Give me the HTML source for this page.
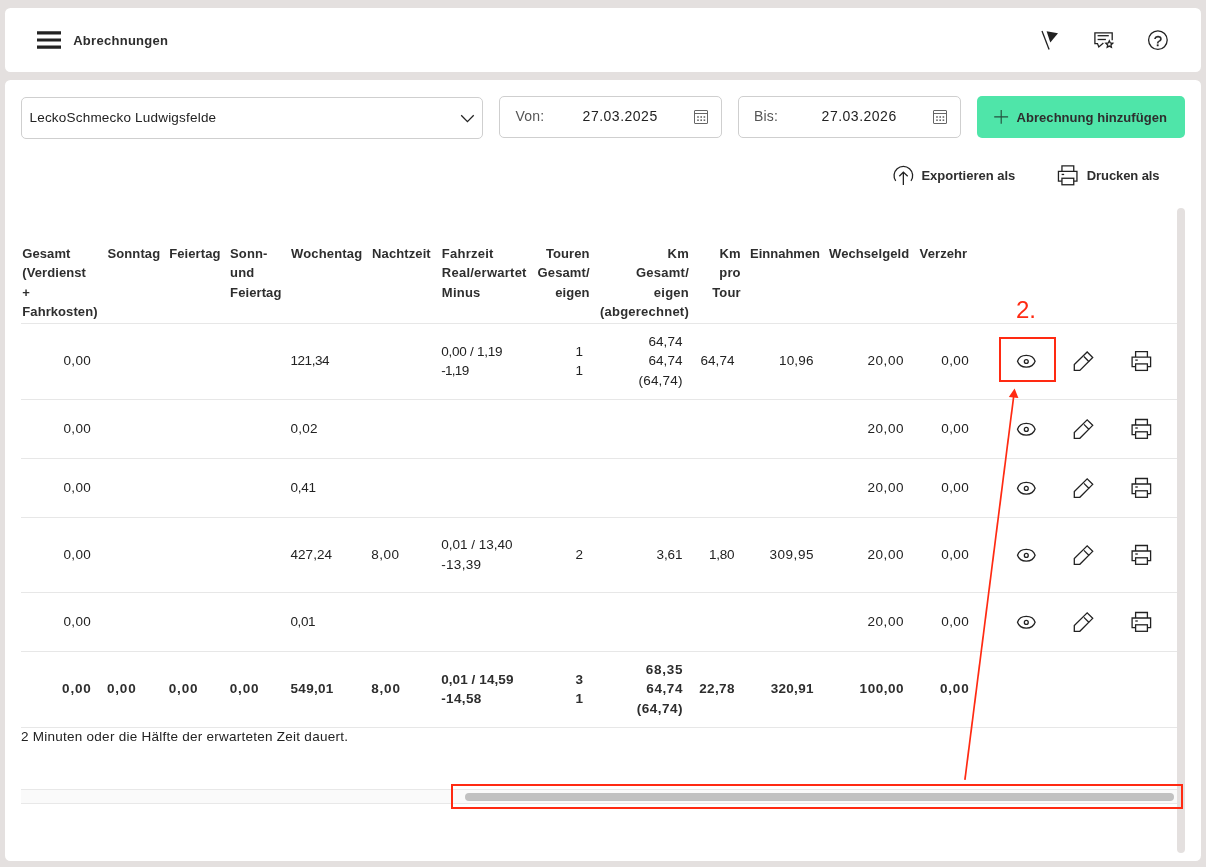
<!DOCTYPE html>
<html lang="de">
<head>
<meta charset="utf-8">
<title>Abrechnungen</title>
<style>
*{box-sizing:border-box;margin:0;padding:0}
html,body{width:1206px;height:867px;overflow:hidden;background:#e4e0df}
body{position:relative;will-change:transform;font-family:"Liberation Sans",sans-serif;font-size:13px;line-height:19.5px;color:#222}
.card{position:absolute;background:#fff;border-radius:5.5px}
.abs{position:absolute}
.t{position:absolute;white-space:nowrap;line-height:19.5px}
.b{font-weight:700;color:#2e2e2e}
.r{text-align:right}
.field{position:absolute;border:1px solid #cfcfcf;border-radius:5px;background:#fff}
.hl{position:absolute;left:21px;width:1156px;height:1px;background:#e7e7e7}
svg{position:absolute;left:0;top:0;overflow:visible}
.ic{stroke:#222;stroke-width:1.3;fill:none;stroke-linejoin:miter}
.red{color:#ff2a12}
</style>
</head>
<body>
<!-- top bar -->
<div class="card" style="left:5px;top:8px;width:1196px;height:64px"></div>
<div class="t b" id="title" style="left:73.2px;top:30.6px;letter-spacing:.28px">Abrechnungen</div>

<!-- main card -->
<div class="card" style="left:5px;top:80px;width:1196px;height:781px"></div>

<!-- toolbar -->
<div class="field" style="left:21px;top:97px;width:462px;height:42px"></div>
<div class="t" id="sel" style="left:29.5px;top:107.8px;font-size:13.5px;letter-spacing:.2px">LeckoSchmecko Ludwigsfelde</div>
<div class="field" style="left:499px;top:96px;width:223px;height:42px"></div>
<div class="t" style="left:515.6px;top:106.9px;color:#555;font-size:14px;letter-spacing:.2px">Von:</div>
<div class="t" style="left:582.6px;top:107px;font-size:14px;letter-spacing:.5px">27.03.2025</div>
<div class="field" style="left:738px;top:96px;width:223px;height:42px"></div>
<div class="t" style="left:754px;top:106.9px;color:#555;font-size:14px;letter-spacing:.2px">Bis:</div>
<div class="t" style="left:821.6px;top:107px;font-size:14px;letter-spacing:.5px">27.03.2026</div>
<div class="abs" style="left:977px;top:96px;width:208px;height:42px;background:#4fe5a9;border-radius:5px"></div>
<div class="t b" style="left:1016.6px;top:107.6px;letter-spacing:.04px">Abrechnung hinzufügen</div>

<div class="t b" style="left:921.4px;top:165.5px">Exportieren als</div>
<div class="t b" style="left:1086.8px;top:165.5px;letter-spacing:-.1px">Drucken als</div>

<!-- vertical scrollbar -->
<div class="abs" style="left:1177px;top:208px;width:8px;height:645px;background:#e4e0df;border-radius:4px"></div>

<!-- table header -->
<div class="t b" style="left:22.3px;top:243.5px;line-height:19.65px;letter-spacing:0.08px">Gesamt<br>(Verdienst<br>+<br>Fahrkosten)</div>
<div class="t b" style="left:107.5px;top:243.5px;line-height:19.65px;letter-spacing:0.1px">Sonntag</div>
<div class="t b" style="left:169.2px;top:243.5px;line-height:19.65px;letter-spacing:0.1px">Feiertag</div>
<div class="t b" style="left:230.1px;top:243.5px;line-height:19.65px;letter-spacing:0.1px">Sonn-<br>und<br>Feiertag</div>
<div class="t b" style="left:291.1px;top:243.5px;line-height:19.65px;letter-spacing:0.15px">Wochentag</div>
<div class="t b" style="left:372.1px;top:243.5px;line-height:19.65px;letter-spacing:0.1px">Nachtzeit</div>
<div class="t b" style="left:441.8px;top:243.5px;line-height:19.65px;letter-spacing:0.25px">Fahrzeit<br>Real/erwartet<br>Minus</div>
<div class="t b r" style="right:616.4px;top:243.5px;line-height:19.65px;letter-spacing:0.1px">Touren<br>Gesamt/<br>eigen</div>
<div class="t b r" style="right:517.0px;top:243.5px;line-height:19.65px;letter-spacing:0.24px">Km<br>Gesamt/<br>eigen<br>(abgerechnet)</div>
<div class="t b r" style="right:465.4px;top:243.5px;line-height:19.65px;letter-spacing:0.1px">Km<br>pro<br>Tour</div>
<div class="t b" style="left:750px;top:243.5px;line-height:19.65px;letter-spacing:0px">Einnahmen</div>
<div class="t b" style="left:829px;top:243.5px;line-height:19.65px;letter-spacing:0.09px">Wechselgeld</div>
<div class="t b" style="left:919.6px;top:243.5px;line-height:19.65px;letter-spacing:0.1px">Verzehr</div>
<div class="hl" style="top:323px"></div>
<div class="hl" style="top:399px"></div>
<div class="hl" style="top:458px"></div>
<div class="hl" style="top:517px"></div>
<div class="hl" style="top:592px"></div>
<div class="hl" style="top:651px"></div>
<div class="hl" style="top:727px"></div>
<!-- table rows -->
<div class="t r" style="right:1114.80px;top:351.47px;font-size:13.5px;letter-spacing:0.35px">0,00</div>
<div class="t" style="left:290.55px;top:351.47px;font-size:13.5px;letter-spacing:-0.47px">121,34</div>
<div class="t" style="left:441.15px;top:341.72px;font-size:13.5px;letter-spacing:-0.24px">0,00 / 1,19</div>
<div class="t" style="left:441.15px;top:361.22px;font-size:13.5px;letter-spacing:-0.69px">-1,19</div>
<div class="t r" style="right:622.65px;top:341.72px;font-size:13.5px;letter-spacing:0.30px">1</div>
<div class="t r" style="right:622.65px;top:361.22px;font-size:13.5px;letter-spacing:0.30px">1</div>
<div class="t r" style="right:523.52px;top:331.97px;font-size:13.5px;letter-spacing:0.03px">64,74</div>
<div class="t r" style="right:523.52px;top:351.47px;font-size:13.5px;letter-spacing:0.03px">64,74</div>
<div class="t r" style="right:523.36px;top:370.97px;font-size:13.5px;letter-spacing:0.19px">(64,74)</div>
<div class="t r" style="right:471.52px;top:351.47px;font-size:13.5px;letter-spacing:0.03px">64,74</div>
<div class="t r" style="right:392.39px;top:351.47px;font-size:13.5px;letter-spacing:0.16px">10,96</div>
<div class="t r" style="right:302.02px;top:351.47px;font-size:13.5px;letter-spacing:0.53px">20,00</div>
<div class="t r" style="right:237.00px;top:351.47px;font-size:13.5px;letter-spacing:0.35px">0,00</div>
<div class="t r" style="right:1114.80px;top:418.97px;font-size:13.5px;letter-spacing:0.35px">0,00</div>
<div class="t" style="left:290.55px;top:418.97px;font-size:13.5px;letter-spacing:0.22px">0,02</div>
<div class="t r" style="right:302.02px;top:418.97px;font-size:13.5px;letter-spacing:0.53px">20,00</div>
<div class="t r" style="right:237.00px;top:418.97px;font-size:13.5px;letter-spacing:0.35px">0,00</div>
<div class="t r" style="right:1114.80px;top:477.97px;font-size:13.5px;letter-spacing:0.35px">0,00</div>
<div class="t" style="left:290.55px;top:477.97px;font-size:13.5px;letter-spacing:-0.28px">0,41</div>
<div class="t r" style="right:302.02px;top:477.97px;font-size:13.5px;letter-spacing:0.53px">20,00</div>
<div class="t r" style="right:237.00px;top:477.97px;font-size:13.5px;letter-spacing:0.35px">0,00</div>
<div class="t r" style="right:1114.80px;top:544.97px;font-size:13.5px;letter-spacing:0.35px">0,00</div>
<div class="t" style="left:290.55px;top:544.97px;font-size:13.5px;letter-spacing:0.03px">427,24</div>
<div class="t" style="left:371.15px;top:544.97px;font-size:13.5px;letter-spacing:0.55px">8,00</div>
<div class="t" style="left:441.15px;top:535.22px;font-size:13.5px;letter-spacing:0.01px">0,01 / 13,40</div>
<div class="t" style="left:441.15px;top:554.72px;font-size:13.5px;letter-spacing:0.33px">-13,39</div>
<div class="t r" style="right:622.65px;top:544.97px;font-size:13.5px;letter-spacing:0.30px">2</div>
<div class="t r" style="right:523.67px;top:544.97px;font-size:13.5px;letter-spacing:-0.12px">3,61</div>
<div class="t r" style="right:471.83px;top:544.97px;font-size:13.5px;letter-spacing:-0.28px">1,80</div>
<div class="t r" style="right:392.02px;top:544.97px;font-size:13.5px;letter-spacing:0.53px">309,95</div>
<div class="t r" style="right:302.02px;top:544.97px;font-size:13.5px;letter-spacing:0.53px">20,00</div>
<div class="t r" style="right:237.00px;top:544.97px;font-size:13.5px;letter-spacing:0.35px">0,00</div>
<div class="t r" style="right:1114.80px;top:611.97px;font-size:13.5px;letter-spacing:0.35px">0,00</div>
<div class="t" style="left:290.55px;top:611.97px;font-size:13.5px;letter-spacing:-0.45px">0,01</div>
<div class="t r" style="right:302.02px;top:611.97px;font-size:13.5px;letter-spacing:0.53px">20,00</div>
<div class="t r" style="right:237.00px;top:611.97px;font-size:13.5px;letter-spacing:0.35px">0,00</div>
<div class="t b r" style="right:1114.33px;top:679.47px;font-size:13.5px;letter-spacing:0.82px">0,00</div>
<div class="t b" style="left:106.95px;top:679.47px;font-size:13.5px;letter-spacing:0.82px">0,00</div>
<div class="t b" style="left:168.75px;top:679.47px;font-size:13.5px;letter-spacing:0.82px">0,00</div>
<div class="t b" style="left:229.75px;top:679.47px;font-size:13.5px;letter-spacing:0.82px">0,00</div>
<div class="t b" style="left:290.55px;top:679.47px;font-size:13.5px;letter-spacing:0.29px">549,01</div>
<div class="t b" style="left:371.15px;top:679.47px;font-size:13.5px;letter-spacing:0.85px">8,00</div>
<div class="t b" style="left:441.15px;top:669.72px;font-size:13.5px;letter-spacing:0.09px">0,01 / 14,59</div>
<div class="t b" style="left:441.15px;top:689.22px;font-size:13.5px;letter-spacing:0.39px">-14,58</div>
<div class="t b r" style="right:622.65px;top:669.72px;font-size:13.5px;letter-spacing:0.30px">3</div>
<div class="t b r" style="right:622.65px;top:689.22px;font-size:13.5px;letter-spacing:0.30px">1</div>
<div class="t b r" style="right:522.82px;top:659.97px;font-size:13.5px;letter-spacing:0.73px">68,35</div>
<div class="t b r" style="right:522.97px;top:679.47px;font-size:13.5px;letter-spacing:0.58px">64,74</div>
<div class="t b r" style="right:523.07px;top:698.97px;font-size:13.5px;letter-spacing:0.48px">(64,74)</div>
<div class="t b r" style="right:471.19px;top:679.47px;font-size:13.5px;letter-spacing:0.36px">22,78</div>
<div class="t b r" style="right:392.26px;top:679.47px;font-size:13.5px;letter-spacing:0.29px">320,91</div>
<div class="t b r" style="right:302.04px;top:679.47px;font-size:13.5px;letter-spacing:0.51px">100,00</div>
<div class="t b r" style="right:236.53px;top:679.47px;font-size:13.5px;letter-spacing:0.82px">0,00</div>
<div class="t" style="left:21px;top:727.1px;font-size:13.5px;letter-spacing:.255px">2 Minuten oder die Hälfte der erwarteten Zeit dauert.</div>
<div class="abs" style="left:21px;top:789px;width:1156px;height:15px;background:#fafafa;border-top:1px solid #e8e8e8;border-bottom:1px solid #e8e8e8"></div>
<div class="abs" style="left:465px;top:793px;width:709px;height:8px;border-radius:4px;background:#c1c1c1"></div>
<svg width="1206" height="867" viewBox="0 0 1206 867">
<g id="icons-top">
<path d="M37,32.9H61M37,40H61M37,47.1H61" stroke="#222" stroke-width="3.2" fill="none"/>
<line x1="1042" y1="30.9" x2="1049.1" y2="49.4" stroke="#222" stroke-width="1.3"/>
<polygon points="1046.6,31.2 1058,33.3 1050.3,42.4" fill="#222"/>
<path class="ic" d="M1103.4,43 L1098.8,47 L1097.5,43.6 L1094.9,43.6 L1094.9,32.9 L1112.2,32.9 L1112.2,40.3"/>
<line class="ic" x1="1097.6" y1="35.7" x2="1108.8" y2="35.7"/><line class="ic" x1="1097.6" y1="39.5" x2="1105.9" y2="39.5"/>
<polygon class="ic" stroke-width="1.1" points="1109.30,40.80 1110.30,43.02 1112.72,43.29 1110.92,44.93 1111.42,47.31 1109.30,46.10 1107.18,47.31 1107.68,44.93 1105.88,43.29 1108.30,43.02"/>
<circle class="ic" cx="1157.9" cy="40.1" r="9.3"/>
<text x="1158" y="45.8" text-anchor="middle" font-size="15" font-family="Liberation Sans, sans-serif" fill="#222" stroke="#222" stroke-width=".3">?</text>
</g>
<path d="M994.2,116.9H1008.1M1001.2,110.1V123.8" stroke="#25503f" stroke-width="1.15" fill="none"/>
<path class="ic" d="M461.2,115.3 L467.45,121.6 L473.7,115.3"/>
<g stroke="#666" fill="none" stroke-width="1"><rect x="694.5" y="110.5" width="13" height="13" rx=".5"/><line x1="694.5" y1="113.5" x2="707.5" y2="113.5"/></g>
<rect x="697.2" y="116.2" width="1.6" height="1.6" fill="#666"/>
<rect x="697.2" y="119.4" width="1.6" height="1.6" fill="#666"/>
<rect x="700.4" y="116.2" width="1.6" height="1.6" fill="#666"/>
<rect x="700.4" y="119.4" width="1.6" height="1.6" fill="#666"/>
<rect x="703.6" y="116.2" width="1.6" height="1.6" fill="#666"/>
<rect x="703.6" y="119.4" width="1.6" height="1.6" fill="#666"/>
<g stroke="#666" fill="none" stroke-width="1"><rect x="933.5" y="110.5" width="13" height="13" rx=".5"/><line x1="933.5" y1="113.5" x2="946.5" y2="113.5"/></g>
<rect x="936.2" y="116.2" width="1.6" height="1.6" fill="#666"/>
<rect x="936.2" y="119.4" width="1.6" height="1.6" fill="#666"/>
<rect x="939.4" y="116.2" width="1.6" height="1.6" fill="#666"/>
<rect x="939.4" y="119.4" width="1.6" height="1.6" fill="#666"/>
<rect x="942.6" y="116.2" width="1.6" height="1.6" fill="#666"/>
<rect x="942.6" y="119.4" width="1.6" height="1.6" fill="#666"/>
<path class="ic" d="M895.73,180.98 A9.3,9.3 0 1 1 910.97,180.98"/>
<path class="ic" d="M903.35,184.9 V172.2 M899.3,176.2 L903.35,172.1 L907.7,176.2"/>
<g class="ic"><path d="M1061.95,171.45 V165.95 H1073.75 V171.45"/><path d="M1061.95,181.05 H1058.45 V171.45 H1076.95 V181.05 H1073.75"/><rect x="1061.95" y="178.25" width="11.8" height="6.5"/><line x1="1061.65" y1="174.45" x2="1064.15" y2="174.45"/></g>
<g class="ic" stroke-width="1.25"><path d="M1017.50,361.30 C1019.00,356.80 1022.30,355.45 1026.30,355.45 C1030.30,355.45 1033.60,356.80 1035.10,361.30 C1033.60,365.80 1030.30,367.15 1026.30,367.15 C1022.30,367.15 1019.00,365.80 1017.50,361.30 Z"/><circle cx="1026.30" cy="361.50" r="1.95"/></g>
<g class="ic"><path d="M1074.30,370.40 V364.60 L1087.16,352.00 L1092.70,357.45 L1079.84,370.40 Z"/><line x1="1083.90" y1="356.50" x2="1089.05" y2="361.67"/></g>
<g class="ic"><path d="M1135.60,357.10 V351.60 H1147.40 V357.10"/><path d="M1135.60,366.70 H1132.10 V357.10 H1150.60 V366.70 H1147.40"/><rect x="1135.60" y="363.90" width="11.8" height="6.5"/><line x1="1135.30" y1="360.10" x2="1137.80" y2="360.10"/></g>
<g class="ic" stroke-width="1.25"><path d="M1017.50,429.20 C1019.00,424.70 1022.30,423.35 1026.30,423.35 C1030.30,423.35 1033.60,424.70 1035.10,429.20 C1033.60,433.70 1030.30,435.05 1026.30,435.05 C1022.30,435.05 1019.00,433.70 1017.50,429.20 Z"/><circle cx="1026.30" cy="429.40" r="1.95"/></g>
<g class="ic"><path d="M1074.30,438.30 V432.50 L1087.16,419.90 L1092.70,425.35 L1079.84,438.30 Z"/><line x1="1083.90" y1="424.40" x2="1089.05" y2="429.57"/></g>
<g class="ic"><path d="M1135.60,425.00 V419.50 H1147.40 V425.00"/><path d="M1135.60,434.60 H1132.10 V425.00 H1150.60 V434.60 H1147.40"/><rect x="1135.60" y="431.80" width="11.8" height="6.5"/><line x1="1135.30" y1="428.00" x2="1137.80" y2="428.00"/></g>
<g class="ic" stroke-width="1.25"><path d="M1017.50,488.20 C1019.00,483.70 1022.30,482.35 1026.30,482.35 C1030.30,482.35 1033.60,483.70 1035.10,488.20 C1033.60,492.70 1030.30,494.05 1026.30,494.05 C1022.30,494.05 1019.00,492.70 1017.50,488.20 Z"/><circle cx="1026.30" cy="488.40" r="1.95"/></g>
<g class="ic"><path d="M1074.30,497.30 V491.50 L1087.16,478.90 L1092.70,484.35 L1079.84,497.30 Z"/><line x1="1083.90" y1="483.40" x2="1089.05" y2="488.57"/></g>
<g class="ic"><path d="M1135.60,484.00 V478.50 H1147.40 V484.00"/><path d="M1135.60,493.60 H1132.10 V484.00 H1150.60 V493.60 H1147.40"/><rect x="1135.60" y="490.80" width="11.8" height="6.5"/><line x1="1135.30" y1="487.00" x2="1137.80" y2="487.00"/></g>
<g class="ic" stroke-width="1.25"><path d="M1017.50,555.20 C1019.00,550.70 1022.30,549.35 1026.30,549.35 C1030.30,549.35 1033.60,550.70 1035.10,555.20 C1033.60,559.70 1030.30,561.05 1026.30,561.05 C1022.30,561.05 1019.00,559.70 1017.50,555.20 Z"/><circle cx="1026.30" cy="555.40" r="1.95"/></g>
<g class="ic"><path d="M1074.30,564.30 V558.50 L1087.16,545.90 L1092.70,551.35 L1079.84,564.30 Z"/><line x1="1083.90" y1="550.40" x2="1089.05" y2="555.57"/></g>
<g class="ic"><path d="M1135.60,551.00 V545.50 H1147.40 V551.00"/><path d="M1135.60,560.60 H1132.10 V551.00 H1150.60 V560.60 H1147.40"/><rect x="1135.60" y="557.80" width="11.8" height="6.5"/><line x1="1135.30" y1="554.00" x2="1137.80" y2="554.00"/></g>
<g class="ic" stroke-width="1.25"><path d="M1017.50,622.20 C1019.00,617.70 1022.30,616.35 1026.30,616.35 C1030.30,616.35 1033.60,617.70 1035.10,622.20 C1033.60,626.70 1030.30,628.05 1026.30,628.05 C1022.30,628.05 1019.00,626.70 1017.50,622.20 Z"/><circle cx="1026.30" cy="622.40" r="1.95"/></g>
<g class="ic"><path d="M1074.30,631.30 V625.50 L1087.16,612.90 L1092.70,618.35 L1079.84,631.30 Z"/><line x1="1083.90" y1="617.40" x2="1089.05" y2="622.57"/></g>
<g class="ic"><path d="M1135.60,618.00 V612.50 H1147.40 V618.00"/><path d="M1135.60,627.60 H1132.10 V618.00 H1150.60 V627.60 H1147.40"/><rect x="1135.60" y="624.80" width="11.8" height="6.5"/><line x1="1135.30" y1="621.00" x2="1137.80" y2="621.00"/></g>
<g stroke="#ff2a12" fill="none" stroke-width="2"><rect x="452" y="785" width="730" height="23"/><rect x="1000" y="338" width="55" height="43"/></g>
<line x1="964.9" y1="779.9" x2="1013.6" y2="397" stroke="#ff2a12" stroke-width="1.7"/>
<polygon points="1014.6,388.6 1008.8,396.9 1018.4,398.1" fill="#ff2a12"/>
</svg>
<div class="t red" style="left:1016px;top:298.2px;font-size:24px;line-height:24px">2.</div>
</body>
</html>
